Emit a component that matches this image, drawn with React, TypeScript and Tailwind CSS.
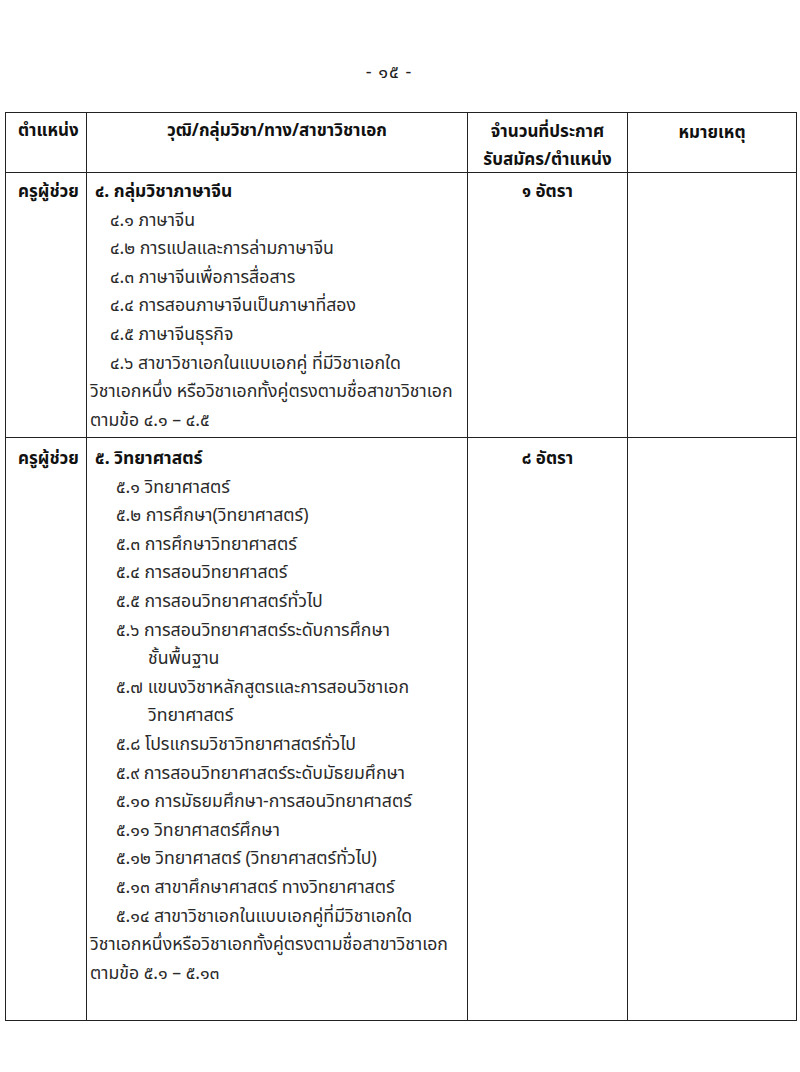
const font = { fontFamily: '"Noto Sans Thai", "Noto Sans", "DejaVu Sans", sans-serif' };

type Line = { text: string; indent: string; bold?: boolean };

const chinese: Line[] = [
  { text: "๔. กลุ่มวิชาภาษาจีน", indent: "pl-[8px]", bold: true },
  { text: "๔.๑ ภาษาจีน", indent: "pl-[23px]" },
  { text: "๔.๒ การแปลและการล่ามภาษาจีน", indent: "pl-[23px]" },
  { text: "๔.๓ ภาษาจีนเพื่อการสื่อสาร", indent: "pl-[23px]" },
  { text: "๔.๔ การสอนภาษาจีนเป็นภาษาที่สอง", indent: "pl-[23px]" },
  { text: "๔.๕ ภาษาจีนธุรกิจ", indent: "pl-[23px]" },
  { text: "๔.๖ สาขาวิชาเอกในแบบเอกคู่ ที่มีวิชาเอกใด", indent: "pl-[23px]" },
  { text: "วิชาเอกหนึ่ง หรือวิชาเอกทั้งคู่ตรงตามชื่อสาขาวิชาเอก", indent: "pl-[3px]" },
  { text: "ตามข้อ ๔.๑ – ๔.๕", indent: "pl-[3px]" },
];

const science: Line[] = [
  { text: "๕. วิทยาศาสตร์", indent: "pl-[8px]", bold: true },
  { text: "๕.๑ วิทยาศาสตร์", indent: "pl-[29px]" },
  { text: "๕.๒ การศึกษา(วิทยาศาสตร์)", indent: "pl-[29px]" },
  { text: "๕.๓ การศึกษาวิทยาศาสตร์", indent: "pl-[29px]" },
  { text: "๕.๔ การสอนวิทยาศาสตร์", indent: "pl-[29px]" },
  { text: "๕.๕ การสอนวิทยาศาสตร์ทั่วไป", indent: "pl-[29px]" },
  { text: "๕.๖ การสอนวิทยาศาสตร์ระดับการศึกษา", indent: "pl-[29px]" },
  { text: "ชั้นพื้นฐาน", indent: "pl-[61px]" },
  { text: "๕.๗ แขนงวิชาหลักสูตรและการสอนวิชาเอก", indent: "pl-[29px]" },
  { text: "วิทยาศาสตร์", indent: "pl-[61px]" },
  { text: "๕.๘ โปรแกรมวิชาวิทยาศาสตร์ทั่วไป", indent: "pl-[29px]" },
  { text: "๕.๙ การสอนวิทยาศาสตร์ระดับมัธยมศึกษา", indent: "pl-[29px]" },
  { text: "๕.๑๐ การมัธยมศึกษา-การสอนวิทยาศาสตร์", indent: "pl-[29px]" },
  { text: "๕.๑๑ วิทยาศาสตร์ศึกษา", indent: "pl-[29px]" },
  { text: "๕.๑๒ วิทยาศาสตร์ (วิทยาศาสตร์ทั่วไป)", indent: "pl-[29px]" },
  { text: "๕.๑๓ สาขาศึกษาศาสตร์ ทางวิทยาศาสตร์", indent: "pl-[29px]" },
  { text: "๕.๑๔ สาขาวิชาเอกในแบบเอกคู่ที่มีวิชาเอกใด", indent: "pl-[29px]" },
  { text: "วิชาเอกหนึ่งหรือวิชาเอกทั้งคู่ตรงตามชื่อสาขาวิชาเอก", indent: "pl-[3px]" },
  { text: "ตามข้อ ๕.๑ – ๕.๑๓", indent: "pl-[3px]" },
];

function Lines({ lines }: { lines: Line[] }) {
  return (
    <div className="leading-[28.6px]">
      {lines.map((l, i) => (
        <div
          key={i}
          className={`${l.indent} whitespace-nowrap ${l.bold ? "text-[17.4px] font-bold text-[#111]" : "text-[17.7px] text-[#2a2a2a]"}`}
        >
          {l.text}
        </div>
      ))}
    </div>
  );
}

function Row({ lines, count, height, top }: { lines: Line[]; count: string; height: string; top: string }) {
  return (
    <div className={`flex ${height} border-t border-[#222]`}>
      <div className={`w-[81px] shrink-0 border-r border-[#222] pl-[12px] ${top} leading-[28.6px] font-bold text-[#111]`}>
        ครูผู้ช่วย
      </div>
      <div className={`w-[381px] shrink-0 border-r border-[#222] ${top}`}>
        <Lines lines={lines} />
      </div>
      <div className={`w-[160px] shrink-0 border-r border-[#222] ${top} text-center leading-[28.6px] font-bold text-[#111]`}>
        {count}
      </div>
      <div className="flex-1" />
    </div>
  );
}

export default function App() {
  return (
    <div className="w-[800px] h-[1072px] bg-white text-[17px] text-[#1a1a1a]" style={font}>
      <div className="pt-[59px] h-[112px] text-center leading-[28px] text-[18px] text-[#222]">
        <span className="ml-[-22px] tracking-[1px]">- ๑๕ -</span>
      </div>
      <div className="ml-[5px] w-[792px] border-x border-b border-[#222]">
        <div className="flex h-[60px] border-t border-[#222] font-bold text-[#111]">
          <div className="w-[81px] shrink-0 border-r border-[#222] pl-[12px] pt-[4px] leading-[28px]">ตำแหน่ง</div>
          <div className="w-[381px] shrink-0 border-r border-[#222] pt-[4px] text-center leading-[28px]">
            วุฒิ/กลุ่มวิชา/ทาง/สาขาวิชาเอก
          </div>
          <div className="w-[160px] shrink-0 border-r border-[#222] pt-[5px] text-center leading-[28px]">
            <div>จำนวนที่ประกาศ</div>
            <div>รับสมัคร/ตำแหน่ง</div>
          </div>
          <div className="flex-1 pt-[6px] text-center leading-[28px]">หมายเหตุ</div>
        </div>
        <Row lines={chinese} count="๑ อัตรา" height="h-[265px]" top="pt-[5px]" />
        <Row lines={science} count="๘ อัตรา" height="h-[583px]" top="pt-[7px]" />
      </div>
    </div>
  );
}
